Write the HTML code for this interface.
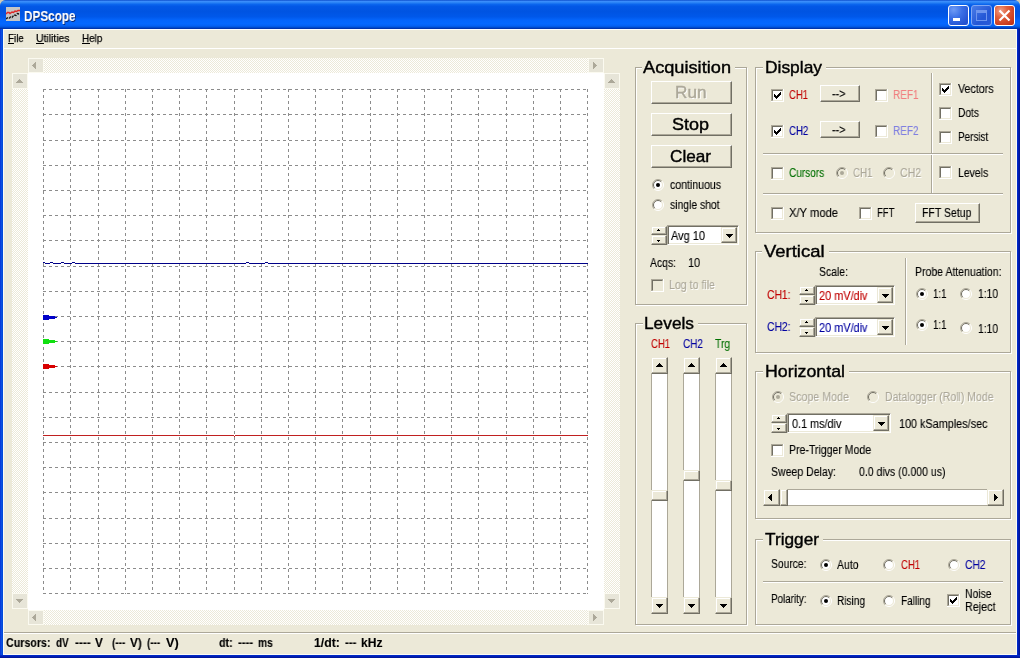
<!DOCTYPE html><html><head><meta charset="utf-8"><title>DPScope</title><style>
html,body{margin:0;padding:0;}
body{width:1020px;height:658px;overflow:hidden;background:#ece9d8;font-family:"Liberation Sans",sans-serif;position:relative;}
.a,.t,.cb,.btn,.btn2,.gb,.sunk{position:absolute;box-sizing:border-box;}
.t{white-space:pre;line-height:1;transform-origin:0 0;will-change:transform;}
.h{-webkit-text-stroke:0.4px currentColor;}
.t{-webkit-text-stroke:0.12px currentColor;}
.t.h{-webkit-text-stroke:0.4px currentColor;}
.cb{width:13px;height:13px;border:2px solid;border-color:#716f64 #ece9d8 #ece9d8 #716f64;box-shadow:-1px -1px 0 #aca899,1px 1px 0 #fff,1px -1px 0 #aca899,-1px 1px 0 #aca899;margin:0;}
.cb{left:0;top:0;width:11px;height:11px;border:1px solid;border-color:#716f64 #ece9d8 #ece9d8 #716f64;margin:1px;box-shadow:-1px -1px 0 #aca899,0 -1px 0 #aca899,-1px 0 0 #aca899,1px 1px 0 #fff,1px 0 0 #fff,0 1px 0 #fff,1px -1px 0 #fff,-1px 1px 0 #fff;}
.btn{background:#ece9d8;border:1px solid;border-color:#fff #716f64 #716f64 #fff;box-shadow:inset -1px -1px 0 #aca899,inset 1px 1px 0 #ece9d8;}
.btn2{background:#ece9d8;border:1px solid;border-color:#ece9d8 #716f64 #716f64 #ece9d8;box-shadow:inset -1px -1px 0 #aca899,inset 1px 1px 0 #fff;}
.gb{border:1px solid #aca899;box-shadow:inset 1px 1px 0 #fff,1px 1px 0 #fff;}
.sunk{border:1px solid;border-color:#aca899 #fff #fff #aca899;box-shadow:inset 1px 1px 0 #716f64,inset -1px -1px 0 #ece9d8;}
.chk{background:conic-gradient(#fff 25%,#ece9d8 0 50%,#fff 0 75%,#ece9d8 0) 0 0/2px 2px;}
</style></head><body>
<div class="a" style="left:0;top:0;width:1020px;height:658px;background:#0054e3"></div>
<div class="a" style="left:0;top:0;width:1020px;height:29px;border-radius:6px 6px 0 0;background:linear-gradient(180deg,#0848c8 0%,#3d8ffc 4.5%,#2a83f5 9%,#0b66ee 15%,#0358e6 22%,#0054e2 40%,#0058ea 58%,#0465fc 70%,#0568ff 82%,#0460f2 90%,#0048c8 95.5%,#00289c 100%)"></div>
<div class="a" style="left:0;top:0;width:6px;height:6px;background:radial-gradient(circle at 6px 6px,transparent 5.5px,#cfcbb8 6.5px)"></div>
<div class="a" style="left:1014px;top:0;width:6px;height:6px;background:radial-gradient(circle at 0 6px,transparent 5.5px,#cfcbb8 6.5px)"></div>
<div class="a" style="left:0;top:29px;width:3px;height:629px;background:linear-gradient(90deg,#0831d9,#0a50e0 50%,#0048d8)"></div>
<div class="a" style="left:1017px;top:29px;width:3px;height:629px;background:linear-gradient(270deg,#00138c,#001cb4 50%,#0030d0)"></div>
<div class="a" style="left:0;top:655px;width:1020px;height:3px;background:linear-gradient(0deg,#00138c,#001cb4 50%,#0030d0)"></div>
<div class="a" style="left:3px;top:29px;width:1014px;height:626px;background:#ece9d8"></div>
<div class="a" style="left:3px;top:29px;width:1014px;height:1px;background:#fff"></div>
<div class="a" style="left:3px;top:29px;width:1px;height:626px;background:#fbfaf4"></div>
<div class="a" style="left:1016px;top:29px;width:1px;height:626px;background:#fbfaf4"></div>
<svg class="a" style="left:6px;top:7px" width="14" height="14" viewBox="0 0 14 14"><rect width="14" height="14" fill="#c6c6c6"/><path d="M0 7l1.500-1.500 1.500 0 1 1 2-1.500 1.500.5 1.500-1.500 1.500.5 1.500-1 2 0" stroke="#e02828" stroke-width="1.500" fill="none"/><path d="M0 12l2-1.500 1.500.5 1-1 1.500.5 2-2.500 2 .5 1.500-2 1.500.5 1 0" stroke="#181818" stroke-width="1.400" fill="none" stroke-dasharray="2.500 1"/></svg>
<div class="t" style="left:24.20px;top:8.73px;font-size:14.5px;color:#fff;transform:scaleX(0.8090);font-weight:bold;text-shadow:1px 1px 0 #0a246a;">DPScope</div>
<div class="a" style="left:948px;top:5px;width:21px;height:21px;border:1px solid #fff;border-radius:3px;background:radial-gradient(circle at 25% 20%,#6f9bf5 0%,#3b6fe6 40%,#2250d0 85%,#2a5ae0 100%)"></div>
<div class="a" style="left:971px;top:5px;width:21px;height:21px;border:1px solid #7fa6f4;border-radius:3px;background:linear-gradient(135deg,#4a7de8,#2457d6 60%,#2a5ad8)"></div>
<div class="a" style="left:994px;top:5px;width:21px;height:21px;border:1px solid #fff;border-radius:3px;background:radial-gradient(circle at 30% 25%,#f0a088 0%,#e0603c 35%,#c8381c 80%,#b03018 100%)"></div>
<div class="a" style="left:953px;top:18px;width:7px;height:3px;background:#fff"></div>
<div class="a" style="left:976px;top:10px;width:11px;height:11px;border:1px solid #6e95ee;border-top:3px solid #6e95ee;box-sizing:border-box"></div>
<svg class="a" style="left:994px;top:5px" width="21" height="21"><path d="M5.5 5.5l10 10M15.5 5.5l-10 10" stroke="#fff" stroke-width="2.2" fill="none"/></svg>
<div class="a" style="left:4px;top:48px;width:1012px;height:1px;background:#fff"></div>
<div class="t" style="left:7.80px;top:32.89px;font-size:11px;color:#000;transform:scaleX(0.8916);-webkit-text-stroke:0.25px #000;">File</div>
<div class="a" style="left:7.8px;top:43px;width:6.7px;height:1px;background:#000"></div>
<div class="t" style="left:36.10px;top:32.89px;font-size:11px;color:#000;transform:scaleX(0.9449);-webkit-text-stroke:0.25px #000;">Utilities</div>
<div class="a" style="left:36.1px;top:43px;width:7.9px;height:1px;background:#000"></div>
<div class="t" style="left:82.30px;top:32.89px;font-size:11px;color:#000;transform:scaleX(0.8972);-webkit-text-stroke:0.25px #000;">Help</div>
<div class="a" style="left:82.3px;top:43px;width:7.9px;height:1px;background:#000"></div>
<div class="a" style="left:28px;top:73px;width:576px;height:537px;background:#fff"></div>
<div class="a chk" style="left:28px;top:58px;width:576px;height:15px"></div>
<div class="a" style="left:28px;top:58px;width:16px;height:15px;background:#e7e5d8;border:1px solid #fbfaf0;box-sizing:border-box"></div>
<svg class="a" style="left:0;top:0;overflow:visible" width="1" height="1" shape-rendering="crispEdges"><path d="M35 62v7h1v-7zM34 63v5h1v-5zM33 64v3h1v-3zM32 65v1h1v-1z" fill="#aca899"/></svg>
<div class="a" style="left:588px;top:58px;width:16px;height:15px;background:#e7e5d8;border:1px solid #fbfaf0;box-sizing:border-box"></div>
<svg class="a" style="left:0;top:0;overflow:visible" width="1" height="1" shape-rendering="crispEdges"><path d="M593 62v7h1v-7zM594 63v5h1v-5zM595 64v3h1v-3zM596 65v1h1v-1z" fill="#aca899"/></svg>
<div class="a chk" style="left:28px;top:610px;width:576px;height:15px"></div>
<div class="a" style="left:28px;top:610px;width:16px;height:15px;background:#e7e5d8;border:1px solid #fbfaf0;box-sizing:border-box"></div>
<svg class="a" style="left:0;top:0;overflow:visible" width="1" height="1" shape-rendering="crispEdges"><path d="M35 614v7h1v-7zM34 615v5h1v-5zM33 616v3h1v-3zM32 617v1h1v-1z" fill="#aca899"/></svg>
<div class="a" style="left:588px;top:610px;width:16px;height:15px;background:#e7e5d8;border:1px solid #fbfaf0;box-sizing:border-box"></div>
<svg class="a" style="left:0;top:0;overflow:visible" width="1" height="1" shape-rendering="crispEdges"><path d="M593 614v7h1v-7zM594 615v5h1v-5zM595 616v3h1v-3zM596 617v1h1v-1z" fill="#aca899"/></svg>
<div class="a chk" style="left:12px;top:73px;width:16px;height:536px"></div>
<div class="a" style="left:12px;top:73px;width:16px;height:16px;background:#e7e5d8;border:1px solid #fbfaf0;box-sizing:border-box"></div>
<svg class="a" style="left:0;top:0;overflow:visible" width="1" height="1" shape-rendering="crispEdges"><path d="M16 82h7v1h-7zM17 81h5v1h-5zM18 80h3v1h-3zM19 79h1v1h-1z" fill="#aca899"/></svg>
<div class="a" style="left:12px;top:593px;width:16px;height:16px;background:#e7e5d8;border:1px solid #fbfaf0;box-sizing:border-box"></div>
<svg class="a" style="left:0;top:0;overflow:visible" width="1" height="1" shape-rendering="crispEdges"><path d="M16 599h7v1h-7zM17 600h5v1h-5zM18 601h3v1h-3zM19 602h1v1h-1z" fill="#aca899"/></svg>
<div class="a chk" style="left:604px;top:73px;width:16px;height:536px"></div>
<div class="a" style="left:604px;top:73px;width:16px;height:16px;background:#e7e5d8;border:1px solid #fbfaf0;box-sizing:border-box"></div>
<svg class="a" style="left:0;top:0;overflow:visible" width="1" height="1" shape-rendering="crispEdges"><path d="M608 82h7v1h-7zM609 81h5v1h-5zM610 80h3v1h-3zM611 79h1v1h-1z" fill="#aca899"/></svg>
<div class="a" style="left:604px;top:593px;width:16px;height:16px;background:#e7e5d8;border:1px solid #fbfaf0;box-sizing:border-box"></div>
<svg class="a" style="left:0;top:0;overflow:visible" width="1" height="1" shape-rendering="crispEdges"><path d="M608 599h7v1h-7zM609 600h5v1h-5zM610 601h3v1h-3zM611 602h1v1h-1z" fill="#aca899"/></svg>
<svg class="a" style="left:0;top:0" width="1020" height="658" shape-rendering="crispEdges"><g stroke="#8c8c8c" stroke-width="1" stroke-dasharray="3 3" fill="none"><path d="M43.5 89V594"/><path d="M70.5 89V594"/><path d="M98.5 89V594"/><path d="M125.5 89V594"/><path d="M152.5 89V594"/><path d="M179.5 89V594"/><path d="M206.5 89V594"/><path d="M234.5 89V594"/><path d="M261.5 89V594"/><path d="M288.5 89V594"/><path d="M315.5 89V594"/><path d="M342.5 89V594"/><path d="M370.5 89V594"/><path d="M397.5 89V594"/><path d="M424.5 89V594"/><path d="M451.5 89V594"/><path d="M478.5 89V594"/><path d="M506.5 89V594"/><path d="M533.5 89V594"/><path d="M560.5 89V594"/><path d="M587.5 89V594"/><path d="M43 89.5H588"/><path d="M43 114.5H588"/><path d="M43 140.5H588"/><path d="M43 165.5H588"/><path d="M43 190.5H588"/><path d="M43 215.5H588"/><path d="M43 240.5H588"/><path d="M43 266.5H588"/><path d="M43 291.5H588"/><path d="M43 316.5H588"/><path d="M43 341.5H588"/><path d="M43 366.5H588"/><path d="M43 392.5H588"/><path d="M43 417.5H588"/><path d="M43 442.5H588"/><path d="M43 467.5H588"/><path d="M43 492.5H588"/><path d="M43 518.5H588"/><path d="M43 543.5H588"/><path d="M43 568.5H588"/><path d="M43 593.5H588"/></g><path d="M43 262h2v1h-2zM45 263h5v1h-5zM50 262h3v1h-3zM53 263h8v1h-8zM61 262h3v1h-3zM64 263h8v1h-8zM72 262h3v1h-3zM75 263h171v1h-171zM246 262h3v1h-3zM249 263h16v1h-16zM265 262h3v1h-3zM268 263h320v1h-320z" fill="#000088" stroke="none"/><path d="M43 435h191v1h-191zM234 436h1v1h-1zM235 435h353v1h-353z" fill="#c02020" stroke="none"/><path d="M43 315h6v1h6v1h2v1h-2v1h-6v1h-6z" fill="#0000c8" stroke="none"/><path d="M43 339h6v1h6v1h2v1h-2v1h-6v1h-6z" fill="#10e010" stroke="none"/><path d="M43 364h6v1h6v1h2v1h-2v1h-6v1h-6z" fill="#d80000" stroke="none"/></svg>
<div class="gb" style="left:635px;top:67px;width:112px;height:238px"></div>
<div class="a" style="left:642px;top:67px;width:93px;height:2px;background:#ece9d8"></div>
<div class="t h" style="left:643.40px;top:58.61px;font-size:17px;color:#000;transform:scaleX(1.0704);">Acquisition</div>
<div class="btn" style="left:651px;top:81px;width:81px;height:23px"></div>
<div class="t h" style="left:674.90px;top:83.53px;font-size:16.5px;color:#000;transform:scaleX(1.0409);color:#aca899;text-shadow:1px 1px 0 #fff;">Run</div>
<div class="btn" style="left:651px;top:113px;width:81px;height:23px"></div>
<div class="t h" style="left:671.90px;top:115.53px;font-size:16.5px;color:#000;transform:scaleX(1.0901);">Stop</div>
<div class="btn" style="left:651px;top:145px;width:81px;height:23px"></div>
<div class="t h" style="left:669.90px;top:147.53px;font-size:16.5px;color:#000;transform:scaleX(1.0397);">Clear</div>
<svg class="a" style="left:652px;top:179px" width="12" height="12" viewBox="0 0 12 12"><circle cx="6" cy="6" r="4.6" fill="#fff"/><path d="M2.1 9.9A5.5 5.5 0 0 1 9.9 2.1" fill="none" stroke="#aca899" stroke-width="1"/><path d="M2.8 9.2A4.5 4.5 0 0 1 9.2 2.8" fill="none" stroke="#716f64" stroke-width="1"/><path d="M9.9 2.1A5.5 5.5 0 0 1 2.1 9.9" fill="none" stroke="#fff" stroke-width="1"/><path d="M9.2 2.8A4.5 4.5 0 0 1 2.8 9.2" fill="none" stroke="#ece9d8" stroke-width="1"/><circle cx="6" cy="6" r="2" fill="#000"/></svg>
<div class="t" style="left:670.10px;top:178.84px;font-size:12px;color:#000;transform:scaleX(0.8804);">continuous</div>
<svg class="a" style="left:652px;top:199px" width="12" height="12" viewBox="0 0 12 12"><circle cx="6" cy="6" r="4.6" fill="#fff"/><path d="M2.1 9.9A5.5 5.5 0 0 1 9.9 2.1" fill="none" stroke="#aca899" stroke-width="1"/><path d="M2.8 9.2A4.5 4.5 0 0 1 9.2 2.8" fill="none" stroke="#716f64" stroke-width="1"/><path d="M9.9 2.1A5.5 5.5 0 0 1 2.1 9.9" fill="none" stroke="#fff" stroke-width="1"/><path d="M9.2 2.8A4.5 4.5 0 0 1 2.8 9.2" fill="none" stroke="#ece9d8" stroke-width="1"/></svg>
<div class="t" style="left:670.10px;top:199.34px;font-size:12px;color:#000;transform:scaleX(0.8645);">single shot</div>
<div class="btn2" style="left:651px;top:226px;width:16px;height:9px"></div>
<svg class="a" style="left:0;top:0;overflow:visible" width="1" height="1" shape-rendering="crispEdges"><path d="M657 230h3v1h-3zM658 229h1v1h-1z" fill="#000"/></svg>
<div class="btn2" style="left:651px;top:235px;width:16px;height:10px"></div>
<svg class="a" style="left:0;top:0;overflow:visible" width="1" height="1" shape-rendering="crispEdges"><path d="M657 240h3v1h-3zM658 241h1v1h-1z" fill="#000"/></svg>
<div class="sunk" style="left:667px;top:225px;width:72px;height:20px;background:#fff"></div>
<div class="btn2" style="left:721px;top:227px;width:16px;height:16px"></div>
<svg class="a" style="left:0;top:0;overflow:visible" width="1" height="1" shape-rendering="crispEdges"><path d="M726 234h7v1h-7zM727 235h5v1h-5zM728 236h3v1h-3zM729 237h1v1h-1z" fill="#000"/></svg>
<div class="t" style="left:670.90px;top:229.84px;font-size:12px;color:#000;transform:scaleX(0.9155);">Avg 10</div>
<div class="t" style="left:650.40px;top:257.34px;font-size:12px;color:#000;transform:scaleX(0.8663);">Acqs:</div>
<div class="t" style="left:688.40px;top:257.34px;font-size:12px;color:#000;transform:scaleX(0.8993);">10</div>
<div class="cb" style="left:651px;top:279px;background:#ece9d8"></div>
<div class="t" style="left:669.40px;top:278.84px;font-size:12px;color:#000;transform:scaleX(0.8841);color:#aca899;text-shadow:1px 1px 0 #fff;">Log to file</div>
<div class="gb" style="left:635px;top:323px;width:112px;height:302px"></div>
<div class="a" style="left:643px;top:323px;width:55px;height:2px;background:#ece9d8"></div>
<div class="t h" style="left:644.40px;top:314.61px;font-size:17px;color:#000;transform:scaleX(1.0174);">Levels</div>
<div class="t" style="left:651.40px;top:337.84px;font-size:12px;color:#c00000;transform:scaleX(0.7913);">CH1</div>
<div class="t" style="left:683.40px;top:337.84px;font-size:12px;color:#0000a0;transform:scaleX(0.8329);">CH2</div>
<div class="t" style="left:715.40px;top:337.84px;font-size:12px;color:#007000;transform:scaleX(0.8544);">Trg</div>
<div class="a" style="left:651px;top:357px;width:17px;height:257px;background:#fff;border-left:1px solid #aca899;border-right:1px solid #aca899;box-sizing:border-box"></div>
<div class="btn2" style="left:651px;top:357px;width:17px;height:17px"></div>
<svg class="a" style="left:0;top:0;overflow:visible" width="1" height="1" shape-rendering="crispEdges"><path d="M656 366h7v1h-7zM657 365h5v1h-5zM658 364h3v1h-3zM659 363h1v1h-1z" fill="#000"/></svg>
<div class="btn2" style="left:651px;top:597px;width:17px;height:17px"></div>
<svg class="a" style="left:0;top:0;overflow:visible" width="1" height="1" shape-rendering="crispEdges"><path d="M656 604h7v1h-7zM657 605h5v1h-5zM658 606h3v1h-3zM659 607h1v1h-1z" fill="#000"/></svg>
<div class="btn2" style="left:651px;top:490px;width:17px;height:11px"></div>
<div class="a" style="left:683px;top:357px;width:17px;height:257px;background:#fff;border-left:1px solid #aca899;border-right:1px solid #aca899;box-sizing:border-box"></div>
<div class="btn2" style="left:683px;top:357px;width:17px;height:17px"></div>
<svg class="a" style="left:0;top:0;overflow:visible" width="1" height="1" shape-rendering="crispEdges"><path d="M688 366h7v1h-7zM689 365h5v1h-5zM690 364h3v1h-3zM691 363h1v1h-1z" fill="#000"/></svg>
<div class="btn2" style="left:683px;top:597px;width:17px;height:17px"></div>
<svg class="a" style="left:0;top:0;overflow:visible" width="1" height="1" shape-rendering="crispEdges"><path d="M688 604h7v1h-7zM689 605h5v1h-5zM690 606h3v1h-3zM691 607h1v1h-1z" fill="#000"/></svg>
<div class="btn2" style="left:683px;top:470px;width:17px;height:11px"></div>
<div class="a" style="left:715px;top:357px;width:17px;height:257px;background:#fff;border-left:1px solid #aca899;border-right:1px solid #aca899;box-sizing:border-box"></div>
<div class="btn2" style="left:715px;top:357px;width:17px;height:17px"></div>
<svg class="a" style="left:0;top:0;overflow:visible" width="1" height="1" shape-rendering="crispEdges"><path d="M720 366h7v1h-7zM721 365h5v1h-5zM722 364h3v1h-3zM723 363h1v1h-1z" fill="#000"/></svg>
<div class="btn2" style="left:715px;top:597px;width:17px;height:17px"></div>
<svg class="a" style="left:0;top:0;overflow:visible" width="1" height="1" shape-rendering="crispEdges"><path d="M720 604h7v1h-7zM721 605h5v1h-5zM722 606h3v1h-3zM723 607h1v1h-1z" fill="#000"/></svg>
<div class="btn2" style="left:715px;top:480px;width:17px;height:11px"></div>
<div class="gb" style="left:755px;top:67px;width:256px;height:166px"></div>
<div class="a" style="left:763px;top:67px;width:63px;height:2px;background:#ece9d8"></div>
<div class="t h" style="left:764.90px;top:58.61px;font-size:17px;color:#000;transform:scaleX(1.0225);">Display</div>
<div class="cb" style="left:771px;top:89px;background:#fff"><svg width="13" height="13" viewBox="0 0 13 13" style="position:absolute;left:-2px;top:-2px"><path d="M3 5v3l2 2 5-5V2L5 7z" fill="#000" shape-rendering="crispEdges"/></svg></div>
<div class="t" style="left:789.10px;top:88.64px;font-size:12px;color:#c00000;transform:scaleX(0.7913);">CH1</div>
<div class="btn" style="left:820px;top:85px;width:40px;height:17px"></div>
<div class="t" style="left:832.40px;top:87.84px;font-size:12px;color:#000;transform:scaleX(0.9000);">--&gt;</div>
<div class="cb" style="left:875px;top:89px;background:#fff"></div>
<div class="t" style="left:892.90px;top:88.84px;font-size:12px;color:#f08080;transform:scaleX(0.8314);">REF1</div>
<div class="cb" style="left:771px;top:125px;background:#fff"><svg width="13" height="13" viewBox="0 0 13 13" style="position:absolute;left:-2px;top:-2px"><path d="M3 5v3l2 2 5-5V2L5 7z" fill="#000" shape-rendering="crispEdges"/></svg></div>
<div class="t" style="left:789.10px;top:124.64px;font-size:12px;color:#0000a0;transform:scaleX(0.8038);">CH2</div>
<div class="btn" style="left:820px;top:121px;width:40px;height:17px"></div>
<div class="t" style="left:832.40px;top:123.84px;font-size:12px;color:#000;transform:scaleX(0.9000);">--&gt;</div>
<div class="cb" style="left:875px;top:125px;background:#fff"></div>
<div class="t" style="left:892.90px;top:124.84px;font-size:12px;color:#8080e0;transform:scaleX(0.8314);">REF2</div>
<div class="a" style="left:931px;top:73px;width:1px;height:121px;background:#aca899;box-shadow:1px 0 0 #fff"></div>
<div class="a" style="left:763px;top:153px;width:240px;height:1px;background:#aca899;box-shadow:0 1px 0 #fff"></div>
<div class="a" style="left:763px;top:193px;width:240px;height:1px;background:#aca899;box-shadow:0 1px 0 #fff"></div>
<div class="cb" style="left:939px;top:83px;background:#fff"><svg width="13" height="13" viewBox="0 0 13 13" style="position:absolute;left:-2px;top:-2px"><path d="M3 5v3l2 2 5-5V2L5 7z" fill="#000" shape-rendering="crispEdges"/></svg></div>
<div class="t" style="left:957.60px;top:82.84px;font-size:12px;color:#000;transform:scaleX(0.8896);">Vectors</div>
<div class="cb" style="left:939px;top:107px;background:#fff"></div>
<div class="t" style="left:958.00px;top:106.84px;font-size:12px;color:#000;transform:scaleX(0.8471);">Dots</div>
<div class="cb" style="left:939px;top:131px;background:#fff"></div>
<div class="t" style="left:958.00px;top:130.84px;font-size:12px;color:#000;transform:scaleX(0.8235);">Persist</div>
<div class="cb" style="left:939px;top:166px;background:#fff"></div>
<div class="t" style="left:958.00px;top:166.84px;font-size:12px;color:#000;transform:scaleX(0.8705);">Levels</div>
<div class="cb" style="left:771px;top:167px;background:#fff"></div>
<div class="t" style="left:789.20px;top:166.84px;font-size:12px;color:#007000;transform:scaleX(0.8379);">Cursors</div>
<svg class="a" style="left:836px;top:167px" width="12" height="12" viewBox="0 0 12 12"><circle cx="6" cy="6" r="4.6" fill="#ece9d8"/><path d="M2.1 9.9A5.5 5.5 0 0 1 9.9 2.1" fill="none" stroke="#aca899" stroke-width="1"/><path d="M2.8 9.2A4.5 4.5 0 0 1 9.2 2.8" fill="none" stroke="#716f64" stroke-width="1"/><path d="M9.9 2.1A5.5 5.5 0 0 1 2.1 9.9" fill="none" stroke="#fff" stroke-width="1"/><path d="M9.2 2.8A4.5 4.5 0 0 1 2.8 9.2" fill="none" stroke="#ece9d8" stroke-width="1"/><circle cx="6" cy="6" r="2" fill="#aca899"/></svg>
<div class="t" style="left:852.90px;top:166.84px;font-size:12px;color:#000;transform:scaleX(0.8121);color:#aca899;text-shadow:1px 1px 0 #fff;">CH1</div>
<svg class="a" style="left:883px;top:167px" width="12" height="12" viewBox="0 0 12 12"><circle cx="6" cy="6" r="4.6" fill="#ece9d8"/><path d="M2.1 9.9A5.5 5.5 0 0 1 9.9 2.1" fill="none" stroke="#aca899" stroke-width="1"/><path d="M2.8 9.2A4.5 4.5 0 0 1 9.2 2.8" fill="none" stroke="#716f64" stroke-width="1"/><path d="M9.9 2.1A5.5 5.5 0 0 1 2.1 9.9" fill="none" stroke="#fff" stroke-width="1"/><path d="M9.2 2.8A4.5 4.5 0 0 1 2.8 9.2" fill="none" stroke="#ece9d8" stroke-width="1"/></svg>
<div class="t" style="left:900.20px;top:166.84px;font-size:12px;color:#000;transform:scaleX(0.8829);color:#aca899;text-shadow:1px 1px 0 #fff;">CH2</div>
<div class="cb" style="left:771px;top:207px;background:#fff"></div>
<div class="t" style="left:788.70px;top:206.84px;font-size:12px;color:#000;transform:scaleX(0.9338);">X/Y mode</div>
<div class="cb" style="left:859px;top:207px;background:#fff"></div>
<div class="t" style="left:876.90px;top:206.84px;font-size:12px;color:#000;transform:scaleX(0.7956);">FFT</div>
<div class="btn" style="left:915px;top:203px;width:65px;height:20px"></div>
<div class="t" style="left:921.90px;top:206.84px;font-size:12px;color:#000;transform:scaleX(0.8765);">FFT Setup</div>
<div class="gb" style="left:755px;top:251px;width:256px;height:102px"></div>
<div class="a" style="left:762px;top:251px;width:67px;height:2px;background:#ece9d8"></div>
<div class="t h" style="left:763.90px;top:242.61px;font-size:17px;color:#000;transform:scaleX(1.0853);">Vertical</div>
<div class="t" style="left:818.90px;top:265.84px;font-size:12px;color:#000;transform:scaleX(0.8696);">Scale:</div>
<div class="t" style="left:914.90px;top:265.84px;font-size:12px;color:#000;transform:scaleX(0.8760);">Probe Attenuation:</div>
<div class="a" style="left:905px;top:258px;width:1px;height:87px;background:#aca899;box-shadow:1px 0 0 #fff"></div>
<div class="t" style="left:766.90px;top:289.34px;font-size:12px;color:#c00000;transform:scaleX(0.8597);">CH1:</div>
<div class="btn2" style="left:799px;top:286px;width:16px;height:9px"></div>
<svg class="a" style="left:0;top:0;overflow:visible" width="1" height="1" shape-rendering="crispEdges"><path d="M805 290h3v1h-3zM806 289h1v1h-1z" fill="#000"/></svg>
<div class="btn2" style="left:799px;top:295px;width:16px;height:10px"></div>
<svg class="a" style="left:0;top:0;overflow:visible" width="1" height="1" shape-rendering="crispEdges"><path d="M805 300h3v1h-3zM806 301h1v1h-1z" fill="#000"/></svg>
<div class="sunk" style="left:815px;top:285px;width:80px;height:20px;background:#fff"></div>
<div class="btn2" style="left:877px;top:287px;width:16px;height:16px"></div>
<svg class="a" style="left:0;top:0;overflow:visible" width="1" height="1" shape-rendering="crispEdges"><path d="M882 294h7v1h-7zM883 295h5v1h-5zM884 296h3v1h-3zM885 297h1v1h-1z" fill="#000"/></svg>
<div class="t" style="left:819.40px;top:289.84px;font-size:12px;color:#c00000;transform:scaleX(0.9091);">20 mV/div</div>
<div class="t" style="left:766.90px;top:321.34px;font-size:12px;color:#0000a0;transform:scaleX(0.8597);">CH2:</div>
<div class="btn2" style="left:799px;top:318px;width:16px;height:9px"></div>
<svg class="a" style="left:0;top:0;overflow:visible" width="1" height="1" shape-rendering="crispEdges"><path d="M805 322h3v1h-3zM806 321h1v1h-1z" fill="#000"/></svg>
<div class="btn2" style="left:799px;top:327px;width:16px;height:10px"></div>
<svg class="a" style="left:0;top:0;overflow:visible" width="1" height="1" shape-rendering="crispEdges"><path d="M805 332h3v1h-3zM806 333h1v1h-1z" fill="#000"/></svg>
<div class="sunk" style="left:815px;top:317px;width:80px;height:20px;background:#fff"></div>
<div class="btn2" style="left:877px;top:319px;width:16px;height:16px"></div>
<svg class="a" style="left:0;top:0;overflow:visible" width="1" height="1" shape-rendering="crispEdges"><path d="M882 326h7v1h-7zM883 327h5v1h-5zM884 328h3v1h-3zM885 329h1v1h-1z" fill="#000"/></svg>
<div class="t" style="left:819.40px;top:321.84px;font-size:12px;color:#0000a0;transform:scaleX(0.9091);">20 mV/div</div>
<svg class="a" style="left:916px;top:288px" width="12" height="12" viewBox="0 0 12 12"><circle cx="6" cy="6" r="4.6" fill="#fff"/><path d="M2.1 9.9A5.5 5.5 0 0 1 9.9 2.1" fill="none" stroke="#aca899" stroke-width="1"/><path d="M2.8 9.2A4.5 4.5 0 0 1 9.2 2.8" fill="none" stroke="#716f64" stroke-width="1"/><path d="M9.9 2.1A5.5 5.5 0 0 1 2.1 9.9" fill="none" stroke="#fff" stroke-width="1"/><path d="M9.2 2.8A4.5 4.5 0 0 1 2.8 9.2" fill="none" stroke="#ece9d8" stroke-width="1"/><circle cx="6" cy="6" r="2" fill="#000"/></svg>
<div class="t" style="left:932.90px;top:288.34px;font-size:12px;color:#000;transform:scaleX(0.8094);">1:1</div>
<svg class="a" style="left:960px;top:288px" width="12" height="12" viewBox="0 0 12 12"><circle cx="6" cy="6" r="4.6" fill="#fff"/><path d="M2.1 9.9A5.5 5.5 0 0 1 9.9 2.1" fill="none" stroke="#aca899" stroke-width="1"/><path d="M2.8 9.2A4.5 4.5 0 0 1 9.2 2.8" fill="none" stroke="#716f64" stroke-width="1"/><path d="M9.9 2.1A5.5 5.5 0 0 1 2.1 9.9" fill="none" stroke="#fff" stroke-width="1"/><path d="M9.2 2.8A4.5 4.5 0 0 1 2.8 9.2" fill="none" stroke="#ece9d8" stroke-width="1"/></svg>
<div class="t" style="left:977.90px;top:288.34px;font-size:12px;color:#000;transform:scaleX(0.8565);">1:10</div>
<svg class="a" style="left:916px;top:319px" width="12" height="12" viewBox="0 0 12 12"><circle cx="6" cy="6" r="4.6" fill="#fff"/><path d="M2.1 9.9A5.5 5.5 0 0 1 9.9 2.1" fill="none" stroke="#aca899" stroke-width="1"/><path d="M2.8 9.2A4.5 4.5 0 0 1 9.2 2.8" fill="none" stroke="#716f64" stroke-width="1"/><path d="M9.9 2.1A5.5 5.5 0 0 1 2.1 9.9" fill="none" stroke="#fff" stroke-width="1"/><path d="M9.2 2.8A4.5 4.5 0 0 1 2.8 9.2" fill="none" stroke="#ece9d8" stroke-width="1"/><circle cx="6" cy="6" r="2" fill="#000"/></svg>
<div class="t" style="left:932.90px;top:319.34px;font-size:12px;color:#000;transform:scaleX(0.8094);">1:1</div>
<svg class="a" style="left:960px;top:322px" width="12" height="12" viewBox="0 0 12 12"><circle cx="6" cy="6" r="4.6" fill="#fff"/><path d="M2.1 9.9A5.5 5.5 0 0 1 9.9 2.1" fill="none" stroke="#aca899" stroke-width="1"/><path d="M2.8 9.2A4.5 4.5 0 0 1 9.2 2.8" fill="none" stroke="#716f64" stroke-width="1"/><path d="M9.9 2.1A5.5 5.5 0 0 1 2.1 9.9" fill="none" stroke="#fff" stroke-width="1"/><path d="M9.2 2.8A4.5 4.5 0 0 1 2.8 9.2" fill="none" stroke="#ece9d8" stroke-width="1"/></svg>
<div class="t" style="left:977.90px;top:322.84px;font-size:12px;color:#000;transform:scaleX(0.8565);">1:10</div>
<div class="gb" style="left:755px;top:371px;width:256px;height:148px"></div>
<div class="a" style="left:763px;top:371px;width:86px;height:2px;background:#ece9d8"></div>
<div class="t h" style="left:764.90px;top:362.61px;font-size:17px;color:#000;transform:scaleX(1.0453);">Horizontal</div>
<svg class="a" style="left:772px;top:391px" width="12" height="12" viewBox="0 0 12 12"><circle cx="6" cy="6" r="4.6" fill="#ece9d8"/><path d="M2.1 9.9A5.5 5.5 0 0 1 9.9 2.1" fill="none" stroke="#aca899" stroke-width="1"/><path d="M2.8 9.2A4.5 4.5 0 0 1 9.2 2.8" fill="none" stroke="#716f64" stroke-width="1"/><path d="M9.9 2.1A5.5 5.5 0 0 1 2.1 9.9" fill="none" stroke="#fff" stroke-width="1"/><path d="M9.2 2.8A4.5 4.5 0 0 1 2.8 9.2" fill="none" stroke="#ece9d8" stroke-width="1"/><circle cx="6" cy="6" r="2" fill="#aca899"/></svg>
<div class="t" style="left:789.40px;top:391.34px;font-size:12px;color:#000;transform:scaleX(0.8905);color:#aca899;text-shadow:1px 1px 0 #fff;">Scope Mode</div>
<svg class="a" style="left:867px;top:391px" width="12" height="12" viewBox="0 0 12 12"><circle cx="6" cy="6" r="4.6" fill="#ece9d8"/><path d="M2.1 9.9A5.5 5.5 0 0 1 9.9 2.1" fill="none" stroke="#aca899" stroke-width="1"/><path d="M2.8 9.2A4.5 4.5 0 0 1 9.2 2.8" fill="none" stroke="#716f64" stroke-width="1"/><path d="M9.9 2.1A5.5 5.5 0 0 1 2.1 9.9" fill="none" stroke="#fff" stroke-width="1"/><path d="M9.2 2.8A4.5 4.5 0 0 1 2.8 9.2" fill="none" stroke="#ece9d8" stroke-width="1"/></svg>
<div class="t" style="left:884.90px;top:391.34px;font-size:12px;color:#000;transform:scaleX(0.8746);color:#aca899;text-shadow:1px 1px 0 #fff;">Datalogger (Roll) Mode</div>
<div class="btn2" style="left:771px;top:414px;width:16px;height:9px"></div>
<svg class="a" style="left:0;top:0;overflow:visible" width="1" height="1" shape-rendering="crispEdges"><path d="M777 418h3v1h-3zM778 417h1v1h-1z" fill="#000"/></svg>
<div class="btn2" style="left:771px;top:423px;width:16px;height:10px"></div>
<svg class="a" style="left:0;top:0;overflow:visible" width="1" height="1" shape-rendering="crispEdges"><path d="M777 428h3v1h-3zM778 429h1v1h-1z" fill="#000"/></svg>
<div class="sunk" style="left:787px;top:413px;width:104px;height:20px;background:#fff"></div>
<div class="btn2" style="left:873px;top:415px;width:16px;height:16px"></div>
<svg class="a" style="left:0;top:0;overflow:visible" width="1" height="1" shape-rendering="crispEdges"><path d="M878 422h7v1h-7zM879 423h5v1h-5zM880 424h3v1h-3zM881 425h1v1h-1z" fill="#000"/></svg>
<div class="t" style="left:791.70px;top:417.84px;font-size:12px;color:#000;transform:scaleX(0.9034);">0.1 ms/div</div>
<div class="t" style="left:899.40px;top:417.84px;font-size:12px;color:#000;transform:scaleX(0.9026);">100 kSamples/sec</div>
<div class="cb" style="left:771px;top:444px;background:#fff"></div>
<div class="t" style="left:789.20px;top:443.84px;font-size:12px;color:#000;transform:scaleX(0.8772);">Pre-Trigger Mode</div>
<div class="t" style="left:770.90px;top:465.84px;font-size:12px;color:#000;transform:scaleX(0.8779);">Sweep Delay:</div>
<div class="t" style="left:859.40px;top:465.84px;font-size:12px;color:#000;transform:scaleX(0.8762);">0.0 divs (0.000 us)</div>
<div class="a" style="left:763px;top:489px;width:241px;height:17px;background:#fff;border-top:1px solid #aca899;border-bottom:1px solid #aca899;box-sizing:border-box"></div>
<div class="btn2" style="left:763px;top:489px;width:17px;height:17px"></div>
<svg class="a" style="left:0;top:0;overflow:visible" width="1" height="1" shape-rendering="crispEdges"><path d="M771 494v7h1v-7zM770 495v5h1v-5zM769 496v3h1v-3zM768 497v1h1v-1z" fill="#000"/></svg>
<div class="btn2" style="left:987px;top:489px;width:17px;height:17px"></div>
<svg class="a" style="left:0;top:0;overflow:visible" width="1" height="1" shape-rendering="crispEdges"><path d="M994 494v7h1v-7zM995 495v5h1v-5zM996 496v3h1v-3zM997 497v1h1v-1z" fill="#000"/></svg>
<div class="btn2" style="left:780px;top:489px;width:8px;height:17px"></div>
<div class="gb" style="left:755px;top:539px;width:256px;height:86px"></div>
<div class="a" style="left:763px;top:539px;width:60px;height:2px;background:#ece9d8"></div>
<div class="t h" style="left:764.90px;top:530.61px;font-size:17px;color:#000;transform:scaleX(1.0148);">Trigger</div>
<div class="t" style="left:770.90px;top:557.84px;font-size:12px;color:#000;transform:scaleX(0.8585);">Source:</div>
<svg class="a" style="left:820px;top:559px" width="12" height="12" viewBox="0 0 12 12"><circle cx="6" cy="6" r="4.6" fill="#fff"/><path d="M2.1 9.9A5.5 5.5 0 0 1 9.9 2.1" fill="none" stroke="#aca899" stroke-width="1"/><path d="M2.8 9.2A4.5 4.5 0 0 1 9.2 2.8" fill="none" stroke="#716f64" stroke-width="1"/><path d="M9.9 2.1A5.5 5.5 0 0 1 2.1 9.9" fill="none" stroke="#fff" stroke-width="1"/><path d="M9.2 2.8A4.5 4.5 0 0 1 2.8 9.2" fill="none" stroke="#ece9d8" stroke-width="1"/><circle cx="6" cy="6" r="2" fill="#000"/></svg>
<div class="t" style="left:836.90px;top:558.84px;font-size:12px;color:#000;transform:scaleX(0.8710);">Auto</div>
<svg class="a" style="left:883px;top:559px" width="12" height="12" viewBox="0 0 12 12"><circle cx="6" cy="6" r="4.6" fill="#fff"/><path d="M2.1 9.9A5.5 5.5 0 0 1 9.9 2.1" fill="none" stroke="#aca899" stroke-width="1"/><path d="M2.8 9.2A4.5 4.5 0 0 1 9.2 2.8" fill="none" stroke="#716f64" stroke-width="1"/><path d="M9.9 2.1A5.5 5.5 0 0 1 2.1 9.9" fill="none" stroke="#fff" stroke-width="1"/><path d="M9.2 2.8A4.5 4.5 0 0 1 2.8 9.2" fill="none" stroke="#ece9d8" stroke-width="1"/></svg>
<div class="t" style="left:900.90px;top:558.84px;font-size:12px;color:#c00000;transform:scaleX(0.7913);">CH1</div>
<svg class="a" style="left:948px;top:559px" width="12" height="12" viewBox="0 0 12 12"><circle cx="6" cy="6" r="4.6" fill="#fff"/><path d="M2.1 9.9A5.5 5.5 0 0 1 9.9 2.1" fill="none" stroke="#aca899" stroke-width="1"/><path d="M2.8 9.2A4.5 4.5 0 0 1 9.2 2.8" fill="none" stroke="#716f64" stroke-width="1"/><path d="M9.9 2.1A5.5 5.5 0 0 1 2.1 9.9" fill="none" stroke="#fff" stroke-width="1"/><path d="M9.2 2.8A4.5 4.5 0 0 1 2.8 9.2" fill="none" stroke="#ece9d8" stroke-width="1"/></svg>
<div class="t" style="left:964.90px;top:558.84px;font-size:12px;color:#0000a0;transform:scaleX(0.8537);">CH2</div>
<div class="a" style="left:763px;top:581px;width:240px;height:1px;background:#aca899;box-shadow:0 1px 0 #fff"></div>
<div class="t" style="left:770.90px;top:593.34px;font-size:12px;color:#000;transform:scaleX(0.8190);">Polarity:</div>
<svg class="a" style="left:820px;top:595px" width="12" height="12" viewBox="0 0 12 12"><circle cx="6" cy="6" r="4.6" fill="#fff"/><path d="M2.1 9.9A5.5 5.5 0 0 1 9.9 2.1" fill="none" stroke="#aca899" stroke-width="1"/><path d="M2.8 9.2A4.5 4.5 0 0 1 9.2 2.8" fill="none" stroke="#716f64" stroke-width="1"/><path d="M9.9 2.1A5.5 5.5 0 0 1 2.1 9.9" fill="none" stroke="#fff" stroke-width="1"/><path d="M9.2 2.8A4.5 4.5 0 0 1 2.8 9.2" fill="none" stroke="#ece9d8" stroke-width="1"/><circle cx="6" cy="6" r="2" fill="#000"/></svg>
<div class="t" style="left:837.40px;top:594.84px;font-size:12px;color:#000;transform:scaleX(0.8396);">Rising</div>
<svg class="a" style="left:883px;top:595px" width="12" height="12" viewBox="0 0 12 12"><circle cx="6" cy="6" r="4.6" fill="#fff"/><path d="M2.1 9.9A5.5 5.5 0 0 1 9.9 2.1" fill="none" stroke="#aca899" stroke-width="1"/><path d="M2.8 9.2A4.5 4.5 0 0 1 9.2 2.8" fill="none" stroke="#716f64" stroke-width="1"/><path d="M9.9 2.1A5.5 5.5 0 0 1 2.1 9.9" fill="none" stroke="#fff" stroke-width="1"/><path d="M9.2 2.8A4.5 4.5 0 0 1 2.8 9.2" fill="none" stroke="#ece9d8" stroke-width="1"/></svg>
<div class="t" style="left:900.90px;top:594.84px;font-size:12px;color:#000;transform:scaleX(0.8345);">Falling</div>
<div class="cb" style="left:947px;top:594px;background:#fff"><svg width="13" height="13" viewBox="0 0 13 13" style="position:absolute;left:-2px;top:-2px"><path d="M3 5v3l2 2 5-5V2L5 7z" fill="#000" shape-rendering="crispEdges"/></svg></div>
<div class="t" style="left:964.90px;top:587.84px;font-size:12px;color:#000;transform:scaleX(0.8636);">Noise</div>
<div class="t" style="left:964.90px;top:600.84px;font-size:12px;color:#000;transform:scaleX(0.8968);">Reject</div>
<div class="a" style="left:4px;top:632px;width:1012px;height:1px;background:#aca899"></div>
<div class="a" style="left:4px;top:633px;width:1012px;height:1px;background:#fff"></div>
<div class="t" style="left:6.30px;top:637.44px;font-size:12px;color:#000;transform:scaleX(0.8897);font-weight:bold;">Cursors:</div>
<div class="t" style="left:56.30px;top:637.44px;font-size:12px;color:#000;transform:scaleX(0.8281);font-weight:bold;">dV</div>
<div class="t" style="left:74.90px;top:637.44px;font-size:12px;color:#000;transform:scaleX(0.9822);font-weight:bold;">----</div>
<div class="t" style="left:94.50px;top:637.44px;font-size:12px;color:#000;transform:scaleX(0.9745);font-weight:bold;">V</div>
<div class="t" style="left:111.60px;top:637.44px;font-size:12px;color:#000;transform:scaleX(0.8321);font-weight:bold;">(---</div>
<div class="t" style="left:130.40px;top:637.44px;font-size:12px;color:#000;transform:scaleX(0.9750);font-weight:bold;">V)</div>
<div class="t" style="left:147.40px;top:637.44px;font-size:12px;color:#000;transform:scaleX(0.8258);font-weight:bold;">(---</div>
<div class="t" style="left:166.10px;top:637.44px;font-size:12px;color:#000;transform:scaleX(1.0583);font-weight:bold;">V)</div>
<div class="t" style="left:219.00px;top:637.44px;font-size:12px;color:#000;transform:scaleX(0.8940);font-weight:bold;">dt:</div>
<div class="t" style="left:238.20px;top:637.44px;font-size:12px;color:#000;transform:scaleX(0.9447);font-weight:bold;">----</div>
<div class="t" style="left:258.20px;top:637.44px;font-size:12px;color:#000;transform:scaleX(0.8478);font-weight:bold;">ms</div>
<div class="t" style="left:313.70px;top:637.44px;font-size:12px;color:#000;transform:scaleX(1.0224);font-weight:bold;">1/dt:</div>
<div class="t" style="left:344.90px;top:637.44px;font-size:12px;color:#000;transform:scaleX(0.9510);font-weight:bold;">---</div>
<div class="t" style="left:361.20px;top:637.44px;font-size:12px;color:#000;transform:scaleX(1.0077);font-weight:bold;">kHz</div>
<div class="a" style="left:3px;top:654px;width:1014px;height:1px;background:#fbfaf4"></div>
</body></html>
